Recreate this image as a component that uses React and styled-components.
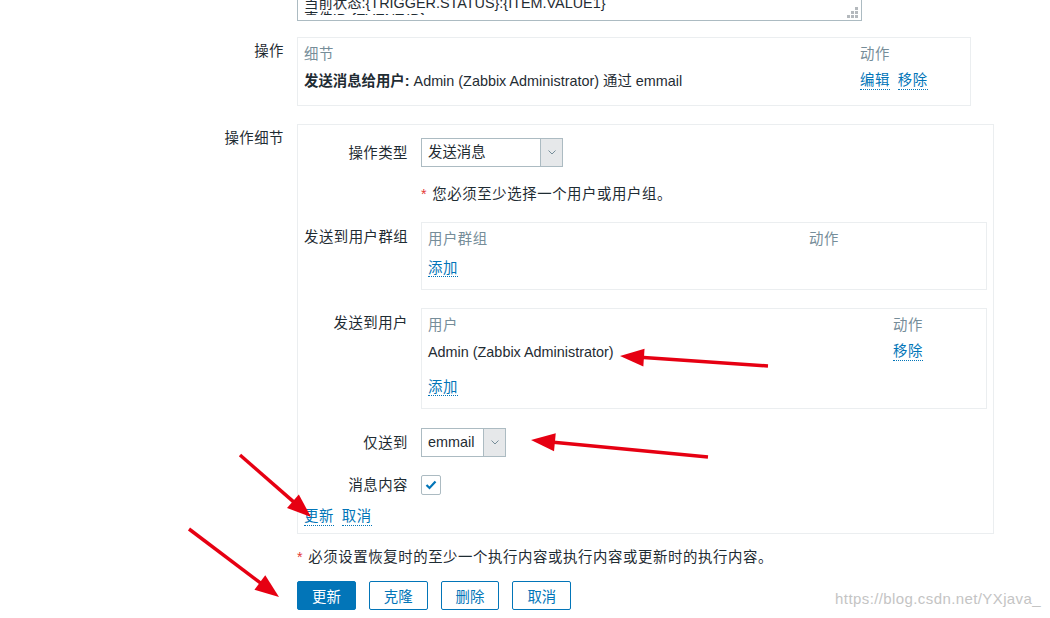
import React from 'react';
import styled, { createGlobalStyle } from 'styled-components';

const GlobalStyle = createGlobalStyle`
  html, body {
    margin: 0;
    background: #fff;
    overflow: hidden;
  }
  body {
    font-family: "Liberation Sans", "Noto Sans CJK SC", sans-serif;
    font-size: 14.4px;
    color: #1f2c33;
  }
`;

const Page = styled.div`
  position: relative;
  width: 1050px;
  height: 618px;
  overflow: hidden;
`;

const Form = styled.div`
  display: flex;
  flex-direction: column;
  margin-top: -10px;
`;

const FormRow = styled.div`
  display: grid;
  grid-template-columns: 284px auto;
  column-gap: 13px;
  align-items: start;
  margin-top: ${({ $mt }) => $mt || 0}px;
`;

const RowLabel = styled.div`
  text-align: right;
  line-height: 18px;
  padding-top: 5px;
  letter-spacing: 0.5px;
`;

const TextArea = styled.div`
  position: relative;
  width: 565px;
  box-sizing: border-box;
  border: 1px solid #acbbc2;
  padding: 4px 6px 5px;
`;

const TextClip = styled.div`
  height: 20px;
  overflow: hidden;
  line-height: 16px;
  white-space: pre;
`;

const Grip = styled.svg`
  position: absolute;
  right: 3px;
  bottom: 2px;
`;

const Table = styled.div`
  width: ${({ $w }) => $w}px;
  box-sizing: border-box;
  border: 1px solid #ebeef0;
  padding: 5px 6px 5px;
`;

const TRow = styled.div`
  display: grid;
  grid-template-columns: 1fr ${({ $action }) => $action}px;
  line-height: 18px;
`;

const THead = styled(TRow)`
  color: #768d99;
  padding: 2px 0 4px;
  letter-spacing: 0.5px;
`;

const TData = styled(TRow)`
  padding: 5px 0 10px;
`;

const TFoot = styled.div`
  line-height: 18px;
  padding: 7px 0;
`;

const Links = styled.div`
  display: flex;
  gap: 8px;
  margin-top: ${({ $mt }) => $mt || 0}px;
`;

const Link = styled.span`
  color: #0275b8;
  line-height: 17px;
  border-bottom: 1px dotted #0275b8;
  letter-spacing: 0.5px;
  cursor: pointer;
`;

const DetailBox = styled.div`
  width: 697px;
  box-sizing: border-box;
  border: 1px solid #ebeef0;
  padding: 13px 6px 7px;
  display: flex;
  flex-direction: column;
`;

const SubRow = styled.div`
  display: grid;
  grid-template-columns: 104px 566px;
  column-gap: 13px;
  align-items: start;
  margin-top: ${({ $mt }) => $mt || 0}px;
`;

const SubLabel = styled.div`
  text-align: right;
  white-space: nowrap;
  line-height: 18px;
  letter-spacing: 0.5px;
  padding-top: ${({ $pt }) => ($pt === undefined ? 6 : $pt)}px;
`;

const Select = styled.div`
  display: inline-flex;
  width: ${({ $w }) => $w}px;
  height: 29px;
  box-sizing: border-box;
  border: 1px solid #acbbc2;
  background: #fff;
`;

const SelectValue = styled.div`
  flex: 1;
  padding-left: 6px;
  line-height: 27px;
`;

const SelectButton = styled.div`
  width: 21px;
  border-left: 1px solid #acbbc2;
  background: #e6e8ea;
  display: flex;
  align-items: center;
  justify-content: center;
`;

const Hint = styled.div`
  line-height: 18px;
  white-space: nowrap;
  letter-spacing: 0.6px;
`;

const Star = styled.span`
  color: #e33734;
  margin-right: 5px;
`;

const Checkbox = styled.div`
  width: 20px;
  height: 20px;
  box-sizing: border-box;
  border: 1px solid #acbbc2;
  border-radius: 2px;
  display: flex;
  align-items: center;
  justify-content: center;
`;

const Buttons = styled.div`
  display: flex;
  gap: 13px;
`;

const Button = styled.button`
  height: 29px;
  padding: 0 14px;
  border: 1px solid #0275b8;
  border-radius: 2px;
  font: inherit;
  background: ${({ $primary }) => ($primary ? '#0275b8' : '#fff')};
  color: ${({ $primary }) => ($primary ? '#fff' : '#0275b8')};
`;

const Watermark = styled.div`
  position: absolute;
  right: 9px;
  top: 590px;
  font-family: "Liberation Sans", sans-serif;
  font-size: 15px;
  color: #c4c4c4;
  letter-spacing: 0.4px;
`;

const Overlay = styled.svg`
  position: absolute;
  left: 0;
  top: 0;
  pointer-events: none;
`;

const Chevron = () => (
  <svg width="8" height="5" viewBox="0 0 8 5">
    <path d="M0.5 0.5 L4 4 L7.5 0.5" fill="none" stroke="#768d99" strokeWidth="1" />
  </svg>
);

const Tick = () => (
  <svg width="12" height="10" viewBox="0 0 12 10">
    <path d="M1.5 5 L4.5 8 L10.5 1.5" fill="none" stroke="#0275b8" strokeWidth="2.2" />
  </svg>
);

// red pointers drawn over the form: [tail, tip]
const arrows = [
  [[768, 366], [620, 356]],
  [[708, 457], [531, 440]],
  [[240, 455], [311, 517]],
  [[189, 529], [279, 597]],
];

function Arrow({ from, to }) {
  const dx = to[0] - from[0];
  const dy = to[1] - from[1];
  const len = Math.hypot(dx, dy);
  const ux = dx / len;
  const uy = dy / len;
  const bx = to[0] - ux * 24;
  const by = to[1] - uy * 24;
  const px = -uy * 9;
  const py = ux * 9;
  const head = `${to[0]},${to[1]} ${bx + px},${by + py} ${bx - px},${by - py}`;
  return (
    <g>
      <line x1={from[0]} y1={from[1]} x2={bx + ux * 4} y2={by + uy * 4} stroke="#e60012" strokeWidth="3.5" />
      <polygon points={head} fill="#e60012" />
    </g>
  );
}

export default function App() {
  return (
    <Page>
      <GlobalStyle />
      <Form>
        <FormRow>
          <span />
          <TextArea>
            <TextClip>
              {'当前状态:{TRIGGER.STATUS}:{ITEM.VALUE1}\n事件ID:{EVENT.ID}'}
            </TextClip>
            <Grip width="11" height="11" viewBox="0 0 11 11">
              <g fill="#b4b9bd">
                <rect x="8" y="0" width="3" height="3" />
                <rect x="4" y="4" width="3" height="3" />
                <rect x="8" y="4" width="3" height="3" />
                <rect x="0" y="8" width="3" height="3" />
                <rect x="4" y="8" width="3" height="3" />
                <rect x="8" y="8" width="3" height="3" />
              </g>
            </Grip>
          </TextArea>
        </FormRow>

        <FormRow $mt={16}>
          <RowLabel>操作</RowLabel>
          <Table $w={674}>
            <THead $action={104}>
              <span>细节</span>
              <span>动作</span>
            </THead>
            <TData $action={104}>
              <span>
                <b>发送消息给用户:</b> Admin (Zabbix Administrator) 通过 emmail
              </span>
              <Links>
                <Link>编辑</Link>
                <Link>移除</Link>
              </Links>
            </TData>
          </Table>
        </FormRow>

        <FormRow $mt={18}>
          <RowLabel>操作细节</RowLabel>
          <DetailBox>
            <SubRow>
              <SubLabel>操作类型</SubLabel>
              <div>
                <Select $w={142}>
                  <SelectValue>发送消息</SelectValue>
                  <SelectButton><Chevron /></SelectButton>
                </Select>
              </div>
            </SubRow>

            <SubRow $mt={18}>
              <span />
              <Hint><Star>*</Star>您必须至少选择一个用户或用户组。</Hint>
            </SubRow>

            <SubRow $mt={19}>
              <SubLabel>发送到用户群组</SubLabel>
              <Table $w={566}>
                <THead $action={171}>
                  <span>用户群组</span>
                  <span>动作</span>
                </THead>
                <TFoot><Link>添加</Link></TFoot>
              </Table>
            </SubRow>

            <SubRow $mt={18}>
              <SubLabel>发送到用户</SubLabel>
              <Table $w={566}>
                <THead $action={87}>
                  <span>用户</span>
                  <span>动作</span>
                </THead>
                <TData $action={87}>
                  <span>Admin (Zabbix Administrator)</span>
                  <Links><Link>移除</Link></Links>
                </TData>
                <TFoot><Link>添加</Link></TFoot>
              </Table>
            </SubRow>

            <SubRow $mt={19}>
              <SubLabel>仅送到</SubLabel>
              <div>
                <Select $w={85}>
                  <SelectValue>emmail</SelectValue>
                  <SelectButton><Chevron /></SelectButton>
                </Select>
              </div>
            </SubRow>

            <SubRow $mt={18}>
              <SubLabel $pt={1}>消息内容</SubLabel>
              <Checkbox><Tick /></Checkbox>
            </SubRow>

            <Links $mt={13}>
              <Link>更新</Link>
              <Link>取消</Link>
            </Links>
          </DetailBox>
        </FormRow>

        <FormRow $mt={14}>
          <span />
          <Hint><Star>*</Star>必须设置恢复时的至少一个执行内容或执行内容或更新时的执行内容。</Hint>
        </FormRow>

        <FormRow $mt={15}>
          <span />
          <Buttons>
            <Button $primary>更新</Button>
            <Button>克隆</Button>
            <Button>删除</Button>
            <Button>取消</Button>
          </Buttons>
        </FormRow>
      </Form>

      <Watermark>https://blog.csdn.net/YXjava_</Watermark>

      <Overlay width="1050" height="618">
        {arrows.map(([from, to], i) => (
          <Arrow key={i} from={from} to={to} />
        ))}
      </Overlay>
    </Page>
  );
}
